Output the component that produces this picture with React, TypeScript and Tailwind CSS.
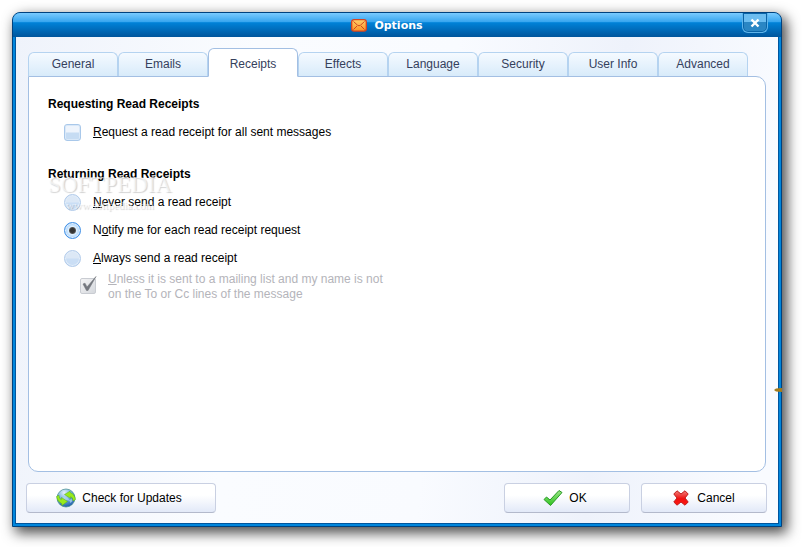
import { useState } from "react";
import type { ReactNode } from "react";
import clsx from "clsx";

const tabs = ["General", "Emails", "Receipts", "Effects", "Language", "Security", "User Info", "Advanced"];

const replies = [
  { id: "never", label: <><u>N</u>ever send a read receipt</> },
  { id: "notify", label: <>N<u>o</u>tify me for each read receipt request</> },
  { id: "always", label: <><u>A</u>lways send a read receipt</> },
];

function MailIcon() {
  return (
    <svg viewBox="0 0 16 13" className="h-[13px] w-4" aria-hidden="true">
      <defs>
        <linearGradient id="mail" x1="0" y1="0" x2="0" y2="1">
          <stop offset="0" stopColor="#ffd06a" />
          <stop offset="1" stopColor="#fb9426" />
        </linearGradient>
      </defs>
      <rect x="0.7" y="0.7" width="14.6" height="11.4" rx="2.4" fill="url(#mail)" stroke="#d8431f" strokeWidth="1.3" />
      <path d="M2.5 2.5 6.5 6.2Q8 7.400 9.500 6.200l4-3.700M2.500 10.500 6 7M13.500 10.500 10 7" fill="none" stroke="#cc3c1c" strokeWidth="0.9" />
    </svg>
  );
}

function GlobeIcon() {
  return (
    <svg viewBox="0 0 20 20" className="size-5" aria-hidden="true">
      <defs>
        <radialGradient id="globe" cx="0.4" cy="0.2" r="0.85">
          <stop offset="0" stopColor="#e6f2fa" />
          <stop offset="0.5" stopColor="#6aa8dc" />
          <stop offset="1" stopColor="#1a56a8" />
        </radialGradient>
      </defs>
      <circle cx="10" cy="10" r="9" fill="url(#globe)" stroke="#3f8a8a" strokeWidth="0.7" />
      <path d="M6 10l3-2 3 2 2 3-3-1-3 1zM13 12l3-1 .5 2-2 2z" fill="#b5d8ee" opacity="0.7" />
      <path d="M8.500 6.500 14 3.200l.4 1.600Q18.500 6 19.500 11.500L17 13Q17 9 14.500 8.700L14.700 10.500z" fill="#98ea1c" stroke="#56b010" strokeWidth="0.500" />
      <path d="M11.500 13.500 6 17.500l-.4-2Q1.500 14 .5 8.500L3 7.200q0 3.800 2.300 4.300L5.500 9.500z" fill="#98ea1c" stroke="#56b010" strokeWidth="0.500" />
    </svg>
  );
}

function CheckIcon() {
  return (
    <svg viewBox="0 0 20 18" className="h-[18px] w-5" aria-hidden="true">
      <defs>
        <linearGradient id="tick" x1="0" y1="0" x2="0" y2="1">
          <stop offset="0" stopColor="#9be486" />
          <stop offset="1" stopColor="#2fc41f" />
        </linearGradient>
      </defs>
      <path d="M1 10.500 3.500 8l3.500 3L16 1.500l3 2L7.500 16.500z" fill="url(#tick)" stroke="#279a24" strokeWidth="1" strokeLinejoin="round" />
    </svg>
  );
}

function CrossIcon() {
  return (
    <svg viewBox="0 0 16 16" className="size-4" aria-hidden="true">
      <defs>
        <linearGradient id="cross" x1="0" y1="0" x2="0" y2="1">
          <stop offset="0" stopColor="#f0807a" />
          <stop offset="0.55" stopColor="#f01010" />
          <stop offset="1" stopColor="#ff1a10" />
        </linearGradient>
      </defs>
      <path
        d="M4 .8 8 4 12 .8 15.200 4 12 8l3.200 4-3.200 3.200L8 12l-4 3.200L.8 12 4 8 .8 4z"
        fill="url(#cross)"
        stroke="#c01c1c"
        strokeWidth="1"
        strokeLinejoin="round"
      />
    </svg>
  );
}

function DialogButton({ icon, children, className }: { icon: ReactNode; children: ReactNode; className: string }) {
  return (
    <button
      type="button"
      className={clsx(
        "flex h-[30px] items-center justify-center rounded border border-[#c9d0e2] border-b-[#b3b9cb] bg-linear-to-b from-white from-40% to-[#e2e9f8]",
        className,
      )}
    >
      {icon}
      {children}
    </button>
  );
}

export default function App() {
  const [tab, setTab] = useState("Receipts");
  const [request, setRequest] = useState(false);
  const [reply, setReply] = useState("notify");

  return (
    <div className="flex min-h-screen overflow-hidden bg-white pt-3 pr-5 pb-5 pl-3 font-['Liberation_Sans',Arial,sans-serif] text-[12px] leading-[15px] text-black">
      <main className="relative flex flex-1 flex-col rounded-t-lg border border-[#00427f] bg-[#0086dc] shadow-[4px_5px_13px_1px_rgba(0,0,0,0.7)]">
        <header className="flex h-6 items-center justify-center gap-[7px] rounded-t-[7px] bg-[linear-gradient(#7acbff,#35a4ee_38%,#0082d8_40%,#00559c)] pr-5">
          <MailIcon />
          <h1 className="font-['DejaVu_Sans','Liberation_Sans',sans-serif] text-[11px] font-bold text-white">Options</h1>
        </header>
        <button
          type="button"
          aria-label="Close"
          className="absolute top-0 right-[13px] flex h-5 w-[26px] items-center justify-center rounded-b-md border border-t-0 border-[#5fb4ea] bg-linear-to-b from-[#6cbdf0] from-45% to-[#2a86c4] to-50% shadow-[inset_0_0_0_1px_#0a64a8]"
        >
          <svg viewBox="0 0 10 10" className="size-[10px]" aria-hidden="true">
            <path d="M1.500 1.500l7 7M8.500 1.500l-7 7" stroke="#fff" strokeWidth="2.400" />
          </svg>
        </button>

        <div className="mx-0.5 mb-0.5 flex flex-1 flex-col border border-t-0 border-[#00569f] bg-[linear-gradient(95deg,#eff3fb,#fafcff_30%,#f9fbff_55%,#eef2fb_76%,#f9fbff_96%)] px-3 pt-[11px] pb-[10px]">
          <nav role="tablist" className="relative flex items-end">
            {tabs.map((name) => (
              <button
                key={name}
                type="button"
                role="tab"
                aria-selected={tab === name}
                onClick={() => setTab(name)}
                className={clsx(
                  "w-[90px] rounded-t-md border text-[#35405c]",
                  tab === name
                    ? "-mb-px h-[29px] border-[#a3bfe3] border-b-white bg-white pt-[3px]"
                    : "h-6 border-b-0 border-[#b5d3f0] bg-linear-to-b from-[#f5faff] to-[#d8ebfa]",
                )}
              >
                {name}
              </button>
            ))}
          </nav>

          <section className="flex-1 rounded-[10px] rounded-tl-none border border-[#a3bfe3] bg-white px-[19px] pt-5">
            <h2 className="font-bold">Requesting Read Receipts</h2>
            <label className="mt-3 ml-4 flex w-fit items-center gap-3">
              <input
                type="checkbox"
                checked={request}
                onChange={(e) => setRequest(e.target.checked)}
                className="size-[17px] appearance-none rounded-[3px] border border-[#a9c8ea] bg-linear-to-b from-[#eef4fc] from-48% to-[#c6dcf3] to-52% shadow-[inset_0_0_0_1px_#d9e8f8] checked:bg-[#5b9be0]"
              />
              <span><u>R</u>equest a read receipt for all sent messages</span>
            </label>

            <div className="relative mt-[26px]">
              <h2 className="font-bold">Returning Read Receipts</h2>
              <div
                aria-hidden="true"
                className="pointer-events-none absolute top-1.5 z-10 w-[124px] text-center font-['Liberation_Serif',serif] text-white/60 [text-shadow:1px_1px_1px_rgba(0,0,0,0.18)]"
              >
                <p className="text-[23px] leading-6">SOFTPEDIA</p>
                <p className="text-[11px] leading-4">www.softpedia.com</p>
              </div>
            </div>
            <div className="mt-3 ml-4 flex flex-col gap-[11px]">
              {replies.map(({ id, label }) => (
                <label key={id} className="flex w-fit items-center gap-3">
                  <input
                    type="radio"
                    name="reply"
                    checked={reply === id}
                    onChange={() => setReply(id)}
                    className="size-[17px] appearance-none rounded-full border border-[#b0caea] bg-linear-to-b from-[#dce8f6] from-48% to-[#cadef5] to-52% shadow-[inset_0_0_0_1px_#e2edf9] checked:border-[#3d8ee6] checked:bg-[radial-gradient(circle,#333_2px,#555_3px,#dff0ff_4px,#8fc6fa_8px)]"
                  />
                  <span>{label}</span>
                </label>
              ))}
            </div>
            <label className="mt-[5px] ml-8 flex w-fit gap-3 text-[#b4b4ba] [text-shadow:1px_1px_0_#fff]">
              <span className="relative mt-1.5 size-4">
                <input
                  type="checkbox"
                  checked
                  disabled
                  className="block size-4 appearance-none rounded-[2px] border border-[#c9ccd2] bg-linear-to-br from-[#f4f4f5] to-[#d5d8dd]"
                />
                <svg viewBox="0 0 17 17" className="absolute -top-0.5 left-0 size-[17px]" aria-hidden="true">
                  <path d="M3 8 5 7.200 7 11 16 .5 8 14.500 6.500 14.500z" fill="#74777e" stroke="#74777e" strokeWidth="0.600" />
                </svg>
              </span>
              <span>
                <u>U</u>nless it is sent to a mailing list and my name is not
                <br />
                on the To or Cc lines of the message
              </span>
            </label>
          </section>

          <footer className="-ml-0.5 -mr-px mt-[11px] flex gap-[11px]">
            <DialogButton icon={<GlobeIcon />} className="mr-auto w-[190px] gap-1.5 pr-1">Check for Updates</DialogButton>
            <DialogButton icon={<CheckIcon />} className="w-[126px] gap-1.5 pr-1">OK</DialogButton>
            <DialogButton icon={<CrossIcon />} className="w-[126px] gap-2">Cancel</DialogButton>
          </footer>
        </div>
        <svg viewBox="0 0 8 6" className="absolute -right-px bottom-[133px] h-1.5 w-2" aria-hidden="true">
          <path d="M0 3 2 1.500 8 1v4L2 4.500z" fill="#a47c1c" />
        </svg>
      </main>
    </div>
  );
}
